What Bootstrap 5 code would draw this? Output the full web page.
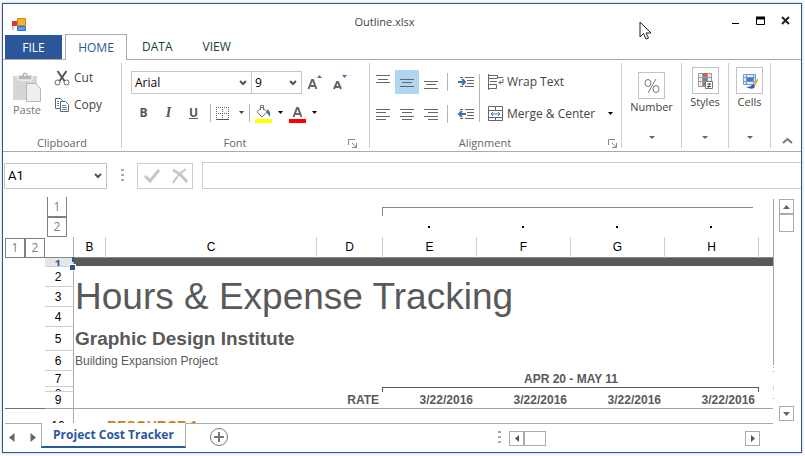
<!DOCTYPE html>
<html lang="en">
<head>
<meta charset="utf-8">
<meta name="viewport" content="width=device-width, initial-scale=1">
<title>Outline.xlsx</title>
<link href="https://cdn.jsdelivr.net/npm/bootstrap@5.3.0/dist/css/bootstrap.min.css" rel="stylesheet">
<style>
:root{--ui:"Open Sans","Noto Sans",sans-serif;--sheet:"Liberation Sans",Arial,sans-serif;--blue:#2b579a;--line:#ababab;--soft:#c6c6c6}
body{font-family:var(--ui);font-size:12px;line-height:16px;color:#444;background:#fff;padding:3px 3px 3px 2px}
button,select,input{font-family:inherit;font-size:inherit;line-height:inherit;color:inherit}
svg{display:block;flex:none}
.app-window{border:1px solid var(--blue);box-shadow:0 0 3px #bbb;background:#fff}
.plain{background:none;border:0;padding:0;display:flex;align-items:center;border-radius:0;white-space:nowrap}
.title-bar{height:30px;padding:0 9px 0 8px;font-size:11px}
.title-bar .app-name{padding:5px 0 0 12px}
.app-icon{margin-top:12px}
.win-tools{gap:13px;padding-top:4px}
.tab-strip{border-bottom:1px solid var(--line);height:26px;padding-left:2px}
.tab-strip button{height:25px;padding:0 15px;color:#1d3b39}
.tab-strip .file-tab{background:var(--blue);color:#fff;width:57px;justify-content:center;margin:1px 3px 0 0;height:24px;padding:2px 0 0}
.tab-strip .home-tab{border:1px solid var(--line);border-bottom:0;background:#fff;color:var(--blue);height:26px;padding:0;width:62px;justify-content:center}
.ribbon{padding:3px 0;border-bottom:1px solid var(--line);height:92px}
.rgroup{border-right:1px solid #cfcfcf;display:flex;flex-direction:column;flex:none}
.rfoot{margin-top:auto;display:flex;align-items:center;color:#666;font-size:11px;line-height:10px;height:10px;padding-right:12px}
.g-clip{width:119px}.g-font{width:248px}.g-align{width:252px}.g-num{width:60px}.g-style{width:47px}.g-cell{width:42px}
.g-clip .rfoot{padding:0}
.g-align .rfoot{padding-right:4px}
.paste{flex-direction:column;font-size:11px;color:#777;padding:9px 0 0 9px}
.clip-list{padding:6px 0 0 12px;gap:9px}
.clip-list button{gap:4px;height:18px}
.combo{appearance:none;border:1px solid var(--soft);border-radius:0;height:23px;padding:0 3px;color:#000;background:#fff url("data:image/svg+xml,%3Csvg xmlns='http://www.w3.org/2000/svg' width='8' height='6'%3E%3Cpath d='M1 1l3 3 3-3' fill='none' stroke='%23555' stroke-width='2'/%3E%3C/svg%3E") no-repeat right 4px center}
.face{width:121px}.size{width:51px;margin-left:-1px}
.g-font .line1{padding:7px 0 0 9px;height:32px}
.g-font .line2{padding-left:9px;height:36px}
.glyph{width:25px;height:22px;justify-content:center;font-weight:700;font-size:12px;color:#555}
.glyph-i{font-family:"Liberation Serif",serif;font-size:14px;font-style:italic}
.vbar{width:1px;background:#b5b5b5;height:18px}
.g-align .body-row{padding:7px 0 0 1px}
.abtn{width:24px;height:24px;justify-content:center}
.abtn.on{background:#b0d5f0}
.two{display:grid;grid-template-rows:24px 24px;row-gap:8px;align-items:center}
.two .words{gap:3px}
.big{flex-direction:column;width:100%;height:100%;padding:4px 0 9px}
.g-num .big{padding-top:9px}
.big .pic{width:27px;height:27px;border:1px solid #c3c3c3;display:flex;align-items:center;justify-content:center}
.big .cap{margin-top:1px;font-size:11px;line-height:14px}
.formula-bar{padding:10px 0 8px 1px}
.name-box{width:103px;height:26px;font-family:Roboto,sans-serif;font-size:13px}
.grip{width:3px;height:14px;background:repeating-linear-gradient(#aaa 0 2px,transparent 2px 5px)}
.formula-bar .grip{margin:0 13px 0 14px}
.checks{border:1px solid #cdcdcd;width:56px;height:26px;gap:10px;padding-left:6px}
.fx{border:1px solid #cdcdcd;border-right:0;height:27px;min-width:0;outline:0;padding:0 4px;margin-left:9px}
.sheet-zone{padding-left:2px}
.grid-area{min-width:0}
.cells{table-layout:fixed;width:100%;border-collapse:separate;border-spacing:0;font-family:var(--sheet);color:#595959;font-size:12px;line-height:14px}
.cells td,.cells th{padding:0;overflow:hidden;white-space:nowrap;vertical-align:middle;font-weight:400}
.cells .k-lvl{width:20px}.cells .k-row{width:29px}.cells .k-b{width:32px}.cells .k-c{width:211px}.cells .k-d{width:66px}.cells .k-n{width:94px}
.cells .rh{border-right:1px solid var(--line);border-bottom:1px solid #cfcfcf;color:#000;text-align:center;padding-right:2px}
.ch th{height:21px;border-right:1px solid #cfcfcf;border-bottom:1px solid #888;color:#000;text-align:center}
.ch th.bare{border:0}
.ch th.corner{border-right:1px solid var(--line)}
.cells .lvl-cell{padding-left:2px}
.lvl{width:20px;height:20px;border:1px solid #808080;background:#fff;color:#808080;font-family:var(--ui);font-size:12px;line-height:16px;padding:0;display:block}
.brk{border-top:1px solid #888;border-left:1px solid #888;height:9px;margin:10px 6px 0 -1px}
.dot{width:2px;height:2px;background:#000;margin:0 auto}
.dots td{padding-right:3px}
.r20{height:20px}.r24{height:24px}.r16{height:16px}.r17{height:17px}
.clip8{height:8px;overflow:hidden}
.clip4{height:4px;line-height:14px;overflow:hidden}
.clip14{height:14px;line-height:18px;padding-top:8px;overflow:hidden}
.cells .row1{background:#595959;border-bottom:1px solid #fff}
.cells .picked{background:#e6e6e6;color:var(--blue);font-weight:700}
.cells .headline{font-size:37px;line-height:44px;padding:0 0 0 1px}
.cells .subhead{font-size:19px;line-height:22px;font-weight:700;padding-left:1px}
.cells .note{padding-left:1px}
.cells .bold td{font-weight:700;text-align:right;padding-right:4px}
.cells .freeze td,.cells .freeze th{border-bottom:1px solid #a5a5a5}
.cells .freeze .gutter{border-bottom-color:#707070}
.cells .last-row .rh{border-bottom:0}
.task{color:#c58219;font-weight:700;font-size:14px;padding-left:1px}
.under{border:1px solid #595959;border-bottom:0;height:5px;margin-left:-1px}
.edge{width:1px;margin-top:2px;background:linear-gradient(#a5a5a5 0 166px,transparent 166px 168px,#a5a5a5 168px 169px,transparent 169px 172px,#a5a5a5 172px 173px,transparent 173px 188px,#a5a5a5 188px 189px,transparent 189px 190px,#a5a5a5 190px 191px,transparent 191px 199px,#a5a5a5 199px 200px,transparent 200px)}
.vscroll{padding:2px 7px 2px 5px}
.sb{border:1px solid var(--line);background:#fff;width:15px;height:15px;display:flex;align-items:center;justify-content:center;padding:0}
.thumb-v{height:18px}
.thumb-h{width:22px}
.handle{right:-4px;bottom:-4px;width:5px;height:5px;background:var(--blue);outline:1px solid #fff}
.handle-top{right:-3px;top:-1px;width:2px;height:5px;background:var(--blue)}
.foot-bar{height:29px;padding:0 28px 0 2px}
.foot-line{border-top:1px solid var(--line)}
.foot-nav{width:36px;gap:15px;padding-left:4px;height:28px}
.sheet-tab{border:1px solid var(--line);border-top:0;border-bottom:2px solid var(--blue);color:var(--blue);font-weight:700;height:25px;width:145px;justify-content:center;font-size:12px}
.add-sheet{margin:0 0 3px 23px}
.hscroll{width:251px;margin:0 13px 0 8px}
.pointer{left:636px;top:17px;pointer-events:none}
</style>
<script src="https://cdn.jsdelivr.net/npm/bootstrap@5.3.0/dist/js/bootstrap.bundle.min.js"></script>
</head>
<body>
<main class="app-window position-relative">
<header class="title-bar d-flex align-items-center">
 <svg width="16" height="16" viewBox="0 0 16 16" class="app-icon"><path d="M2 9v4" stroke="#999"/><path d="M1 4h5v5H1z" fill="#d9373a"/><path d="M6.500 1.500h8v7h-8z" fill="#f3b32b" stroke="#c98a13"/><path d="M6.500 9.500h8v4h-8z" fill="#5b9cf0" stroke="#2f6ed0"/></svg>
 <div class="app-name flex-fill text-center">Outline.xlsx</div>
 <div class="win-tools d-flex">
  <button class="plain" aria-label="Minimize"><svg width="12" height="12"><path d="M2 8.500h7" stroke="#000"/></svg></button>
  <button class="plain" aria-label="Maximize"><svg width="12" height="12"><path d="M1.500 3v6.500h8V3" fill="none" stroke="#000"/><path d="M1 3h9" stroke="#000" stroke-width="3"/></svg></button>
  <button class="plain" aria-label="Close"><svg width="12" height="12"><path d="M2 2l7 7M9 2l-7 7" stroke="#222" stroke-width="2"/></svg></button>
 </div>
</header>
<nav class="tab-strip d-flex" aria-label="Ribbon tabs">
 <button class="plain file-tab">FILE</button>
 <button class="plain home-tab">HOME</button>
 <button class="plain">DATA</button>
 <button class="plain">VIEW</button>
</nav>
<section class="ribbon d-flex">
 <div class="rgroup g-clip">
  <div class="d-flex align-items-start">
   <button class="plain paste"><svg width="30" height="30"><path d="M1 4h24v24H1z" fill="#d6d6d6"/><path d="M6 3h4a3 3 0 0 1 6 0h4v5H6z" fill="#b9b9b9" stroke="#fff"/><circle cx="13" cy="3" r="1" fill="#fff"/><path d="M14.500 11.500h9l5 5v13h-14z" fill="#efefef" stroke="#b5b5b5"/></svg>Paste</button>
   <div class="clip-list d-flex flex-column">
    <button class="plain"><svg width="16" height="16" fill="none" stroke="#666"><path d="M3.500 1L10.500 11M12.500 1L5.500 11" stroke="#555" stroke-width="2"/><circle cx="3.500" cy="12.500" r="2.500"/><circle cx="12.500" cy="12.500" r="2.500"/></svg>Cut</button>
    <button class="plain"><svg width="16" height="16" fill="#fff" stroke="#666"><path d="M1.500 1.500h5l2 2v8h-7z"/><path d="M6.500 4.500h5l3 3v7h-8z"/><path d="M3 4.500h2M3 6.500h2M3 8.500h2M8 8.500h4M8 10.500h5M8 12.500h5" stroke="#4a7fb8"/></svg>Copy</button>
   </div>
  </div>
  <div class="rfoot"><span class="flex-fill text-center">Clipboard</span></div>
 </div>
 <div class="rgroup g-font">
  <div class="line1 d-flex align-items-center">
   <select class="combo face" aria-label="Font"><option>Arial</option></select>
   <select class="combo size" aria-label="Font size"><option>9</option></select>
   <button class="plain glyph" aria-label="Increase font size"><svg width="16" height="18" viewBox="2 1 16 18" fill="none"><path d="M3.500 16L7 7h1l3.500 9M5 13h5" stroke="#666" stroke-width="2"/><path d="M12 5h5l-2.500-3z" fill="#3c75ae"/></svg></button>
   <button class="plain glyph" aria-label="Decrease font size"><svg width="16" height="18" viewBox="2 1 16 18" fill="none"><path d="M4 16L7 9h1l3 7M5 14h5" stroke="#666" stroke-width="2"/><path d="M12 2h5l-2.500 3z" fill="#3c75ae"/></svg></button>
  </div>
  <div class="line2 d-flex align-items-center">
   <button class="plain glyph">B</button><button class="plain glyph glyph-i">I</button><button class="plain glyph text-decoration-underline">U</button>
   <span class="vbar ms-1 me-1"></span>
   <button class="plain" aria-label="Borders"><svg width="15" height="15"><path d="M1.500 1v12M7.500 1v12M13.500 1v12M1 1.500h13M1 7.500h13" stroke="#666" stroke-dasharray="1 1"/><path d="M1 13.500h13" stroke="#555"/></svg></button>
   <button class="plain ms-1 ps-1" aria-label="Border options"><svg width="7" height="4"><path d="M1 0h5L3.500 3z" fill="#444"/></svg></button>
   <span class="vbar ms-1 me-1"></span>
   <button class="plain" aria-label="Fill color"><svg width="19" height="19"><path d="M3 8l5-5 5 5-5 5z" fill="#fff" stroke="#777"/><path d="M6.500 6V1.500h3V6" fill="none" stroke="#777"/><path d="M13 5q4 2 3 8l-3-4z" fill="#3c75ae"/><path d="M1 15h17v4H1z" fill="#ff0"/></svg></button>
   <button class="plain ms-1" aria-label="Fill color options"><svg width="7" height="4"><path d="M1 0h5L3.500 3z" fill="#000"/></svg></button>
   <button class="plain ms-1" aria-label="Font color"><svg width="19" height="19"><path d="M5.500 13L9 4h1l3.500 9M7 10h5" fill="none" stroke="#666" stroke-width="2"/><path d="M1 15h17v4H1z" fill="red"/></svg></button>
   <button class="plain ms-1" aria-label="Font color options"><svg width="7" height="4"><path d="M1 0h5L3.500 3z" fill="#000"/></svg></button>
  </div>
  <div class="rfoot"><span class="flex-fill text-center">Font</span><button class="plain" aria-label="Font settings"><svg width="9" height="9" fill="none" stroke="#888"><path d="M.5 6V.5H7M4 4l4 4M8.500 4v4.500H4"/></svg></button></div>
 </div>
 <div class="rgroup g-align">
  <div class="body-row d-flex">
   <div class="two">
    <div class="d-flex">
     <button class="plain abtn" aria-label="Top align"><svg width="14" height="18" stroke="#666"><path d="M0 2.500h14M2 6.500h10M0 9.500h14"/></svg></button>
     <button class="plain abtn on" aria-label="Middle align"><svg width="14" height="18" stroke="#666"><path d="M0 6.500h14M2 9.500h10M0 13.500h14"/></svg></button>
     <button class="plain abtn" aria-label="Bottom align"><svg width="14" height="18" stroke="#666"><path d="M0 8.500h14M2 11.500h10M0 15.500h14"/></svg></button>
    </div>
    <div class="d-flex">
     <button class="plain abtn" aria-label="Align left"><svg width="14" height="14" stroke="#666"><path d="M0 2.500h14M0 5.500h10M0 9.500h14M0 12.500h10"/></svg></button>
     <button class="plain abtn" aria-label="Center"><svg width="14" height="14" stroke="#666"><path d="M0 2.500h14M2 5.500h10M0 9.500h14M2 12.500h10"/></svg></button>
     <button class="plain abtn" aria-label="Align right"><svg width="14" height="14" stroke="#666"><path d="M0 2.500h14M4 5.500h10M0 9.500h14M4 12.500h10"/></svg></button>
    </div>
   </div>
   <div class="two ms-1 me-2"><span class="vbar"></span><span class="vbar"></span></div>
   <div class="two">
    <button class="plain" aria-label="Increase indent"><svg width="19" height="16" viewBox="-1 0 19 16" stroke="#666"><path d="M3 3.500h3M8 3.500h9M10 6.500h7M10 9.500h7M3 12.500h3M8 12.500h9"/><path d="M1 8h7M5 5l3 3-3 3" fill="none" stroke="#3c75ae" stroke-width="2"/></svg></button>
    <button class="plain" aria-label="Decrease indent"><svg width="19" height="16" viewBox="-1 0 19 16" stroke="#666"><path d="M3 3.500h3M8 3.500h9M10 6.500h7M10 9.500h7M3 12.500h3M8 12.500h9"/><path d="M2 8h7M5 5L2 8l3 3" fill="none" stroke="#3c75ae" stroke-width="2"/></svg></button>
   </div>
   <span class="vbar h-auto my-1 ms-1 me-2"></span>
   <div class="two">
    <button class="plain words"><svg width="16" height="16" fill="none" stroke="#666"><path d="M.5 0v16M.5 1.500h9v3h-9M2 7.500h7M.5 10.500h8v4h-8M9 3.500h6"/><path d="M15 5v3.500h-4M13 6.500l-2 2 2 2"/></svg>Wrap Text</button>
    <div class="d-flex"><button class="plain words"><svg width="16" height="16" fill="none" stroke="#666"><path d="M.5.5h14v14H.5zM.5 4.500h14M.5 11.500h14M7.500.5v4M7.500 11.500v3"/><path d="M3 8h9M5 6L3 8l2 2M10 6l2 2-2 2" stroke="#3c75ae"/></svg>Merge &amp; Center</button>
    <button class="plain ms-2 ps-1" aria-label="Merge options"><svg width="7" height="4"><path d="M1 0h5L3.500 3z" fill="#000"/></svg></button></div>
   </div>
  </div>
  <div class="rfoot"><span class="flex-fill text-center me-2">Alignment</span><button class="plain" aria-label="Alignment settings"><svg width="9" height="9" fill="none" stroke="#888"><path d="M.5 6V.5H7M4 4l4 4M8.500 4v4.500H4"/></svg></button></div>
 </div>
 <div class="rgroup g-num"><button class="plain big"><span class="pic"><svg width="18" height="18" fill="none" stroke="#777"><ellipse cx="5" cy="6" rx="3" ry="3.500"/><ellipse cx="13" cy="12" rx="3" ry="3.500"/><path d="M13 2L5 16"/></svg></span><span class="cap">Number</span><svg class="mt-auto" width="6" height="3"><path d="M0 0h6L3 3z" fill="#666"/></svg></button></div>
 <div class="rgroup g-style"><button class="plain big"><span class="pic"><svg width="18" height="18"><path d="M2.500 1.500h13v13h-13zM6.500 1.500v13M11.500 1.500v13M2 5.500h14M2 9.500h14" fill="#eee" stroke="#999"/><path d="M7 1h4v4H7zM7 10h2v4H7z" fill="#e0603a"/><path d="M7 6h4v3H7z" fill="#4a8bc8"/><path d="M9.500 9.500h7v7h-7z" fill="#fff" stroke="#777"/><path d="M11 12h4M11 14.500h4M14 11l-2 5" stroke="#555"/></svg></span><span class="cap">Styles</span><svg class="mt-auto" width="6" height="3"><path d="M0 0h6L3 3z" fill="#666"/></svg></button></div>
 <div class="rgroup g-cell"><button class="plain big"><span class="pic"><svg width="18" height="18"><path d="M2.500 2.500h12v10h-12z" fill="#e4ecfa" stroke="#7b97c9"/><path d="M5.500 2v11M12.500 2v11M2 5.500h13M2 9.500h13" stroke="#7b97c9"/><path d="M6 6h6v3H6z" fill="#3d78e0"/><path d="M17 6l-5 6 2 2 3-5z" fill="#e5b23c"/><path d="M12 12q-2 3-7 3 8 4 9-1z" fill="#2d5fb8"/></svg></span><span class="cap">Cells</span><svg class="mt-auto" width="6" height="3"><path d="M0 0h6L3 3z" fill="#666"/></svg></button></div>
 <button class="plain ms-auto me-2 align-self-end pb-1" aria-label="Collapse ribbon"><svg width="11" height="7"><path d="M1 6l4.500-4L10 6" fill="none" stroke="#777" stroke-width="2"/></svg></button>
</section>
<section class="formula-bar d-flex align-items-center">
 <select class="combo name-box" aria-label="Name box"><option>A1</option></select>
 <span class="grip"></span>
 <div class="checks d-flex align-items-center">
  <button class="plain" aria-label="Enter"><svg width="18" height="16"><path d="M1 8l5 5L15 2" fill="none" stroke="#c6c6c6" stroke-width="3"/></svg></button>
  <button class="plain" aria-label="Cancel"><svg width="18" height="16" fill="none" stroke="#c6c6c6"><path d="M1 2q8 4 14 12" stroke-width="3"/><path d="M14 1Q6 6 1 15" stroke-width="2"/></svg></button>
 </div>
 <input class="fx flex-fill" type="text" aria-label="Formula">
</section>
<section class="sheet-zone d-flex">
 <div class="grid-area flex-fill">
 <table class="cells">
  <colgroup><col class="k-lvl"><col class="k-lvl"><col class="k-row"><col class="k-b"><col class="k-c"><col class="k-d"><col class="k-n"><col class="k-n"><col class="k-n"><col class="k-n"><col></colgroup>
  <thead>
  <tr class="r20"><td colspan="2"></td><td class="lvl-cell"><button class="lvl border-top-0">1</button></td><td colspan="3"></td><td colspan="4" class="align-top overflow-visible"><div class="brk"></div></td><td></td></tr>
  <tr class="r20 dots"><td colspan="2"></td><td class="lvl-cell pe-0"><button class="lvl">2</button></td><td colspan="3"></td><td><div class="dot"></div></td><td><div class="dot"></div></td><td><div class="dot"></div></td><td><div class="dot"></div></td><td></td></tr>
  <tr class="ch"><th class="bare"><button class="lvl">1</button></th><th class="bare"><button class="lvl">2</button></th><th class="corner"></th><th scope="col">B</th><th scope="col">C</th><th scope="col">D</th><th scope="col">E</th><th scope="col">F</th><th scope="col">G</th><th scope="col">H</th><th class="border-end-0"></th></tr>
  </thead>
  <tbody>
  <tr><td colspan="2"></td><th class="rh picked overflow-visible" scope="row"><div class="position-relative"><div class="clip8">1</div><i class="handle-top position-absolute"></i><i class="handle position-absolute"></i></div></th><td colspan="8" class="row1"></td></tr>
  <tr class="r20"><td colspan="2"></td><th class="rh" scope="row">2</th><td colspan="8" rowspan="3" class="headline">Hours &amp; Expense Tracking</td></tr>
  <tr class="r20"><td colspan="2"></td><th class="rh" scope="row">3</th></tr>
  <tr class="r20"><td colspan="2"></td><th class="rh" scope="row">4</th></tr>
  <tr class="r24"><td colspan="2"></td><th class="rh" scope="row">5</th><td colspan="8" class="subhead">Graphic Design Institute</td></tr>
  <tr class="r20"><td colspan="2"></td><th class="rh" scope="row">6</th><td colspan="8" class="note">Building Expansion Project</td></tr>
  <tr class="r16"><td colspan="2"></td><th class="rh" scope="row">7</th><td colspan="3"></td><td colspan="4" class="text-center"><b>APR 20 - MAY 11</b></td><td></td></tr>
  <tr><td colspan="2"></td><th class="rh" scope="row"><div class="clip4">8</div></th><td colspan="3"></td><td colspan="4" class="align-top overflow-visible"><div class="under"></div></td><td></td></tr>
  <tr class="r17 bold freeze"><td class="gutter" colspan="2"></td><th class="rh" scope="row">9</th><td></td><td></td><td>RATE</td><td>3/22/2016</td><td>3/22/2016</td><td>3/22/2016</td><td>3/22/2016</td><td></td></tr>
  <tr class="last-row"><td colspan="2"></td><th class="rh" scope="row"><div class="clip14">10</div></th><td></td><td colspan="7"><div class="clip14 task">RESOURCE 1</div></td></tr>
  </tbody>
 </table>
 </div>
 <div class="edge flex-shrink-0"></div>
 <div class="vscroll d-flex flex-column flex-shrink-0">
  <button class="sb" aria-label="Scroll up"><svg width="7" height="4"><path d="M0 4l3.500-4L7 4z" fill="#666"/></svg></button>
  <div class="sb thumb-v"></div>
  <button class="sb mt-auto" aria-label="Scroll down"><svg width="7" height="4"><path d="M0 0h7L3.500 4z" fill="#666"/></svg></button>
 </div>
</section>
<footer class="foot-bar d-flex align-items-start">
 <div class="foot-nav foot-line d-flex align-items-center">
  <button class="plain" aria-label="Previous sheet"><svg width="6" height="9"><path d="M5.500 0v9L0 4.500z" fill="#666"/></svg></button>
  <button class="plain" aria-label="Next sheet"><svg width="6" height="9"><path d="M.5 0v9L6 4.500z" fill="#666"/></svg></button>
 </div>
 <button class="plain sheet-tab">Project Cost Tracker</button>
 <div class="foot-line flex-fill d-flex align-items-center h-100">
  <button class="plain add-sheet" aria-label="New sheet"><svg width="20" height="20" fill="none" stroke="#777"><circle cx="10" cy="10" r="8.500"/><path d="M5 10h10M10 5v10" stroke-width="2"/></svg></button>
  <span class="grip ms-auto"></span>
  <div class="hscroll d-flex">
   <button class="sb" aria-label="Scroll left"><svg width="4" height="7"><path d="M4 0v7L0 3.500z" fill="#555"/></svg></button>
   <div class="sb thumb-h"></div>
   <button class="sb ms-auto" aria-label="Scroll right"><svg width="4" height="7"><path d="M0 0v7l4-3.500z" fill="#555"/></svg></button>
  </div>
 </div>
</footer>
<svg class="pointer position-absolute" width="13" height="20"><path d="M1 1v15l3.500-3.500L7 18l2.500-1-2.500-5h5z" fill="#fff" stroke="#222"/></svg>
</main>
</body>
</html>
